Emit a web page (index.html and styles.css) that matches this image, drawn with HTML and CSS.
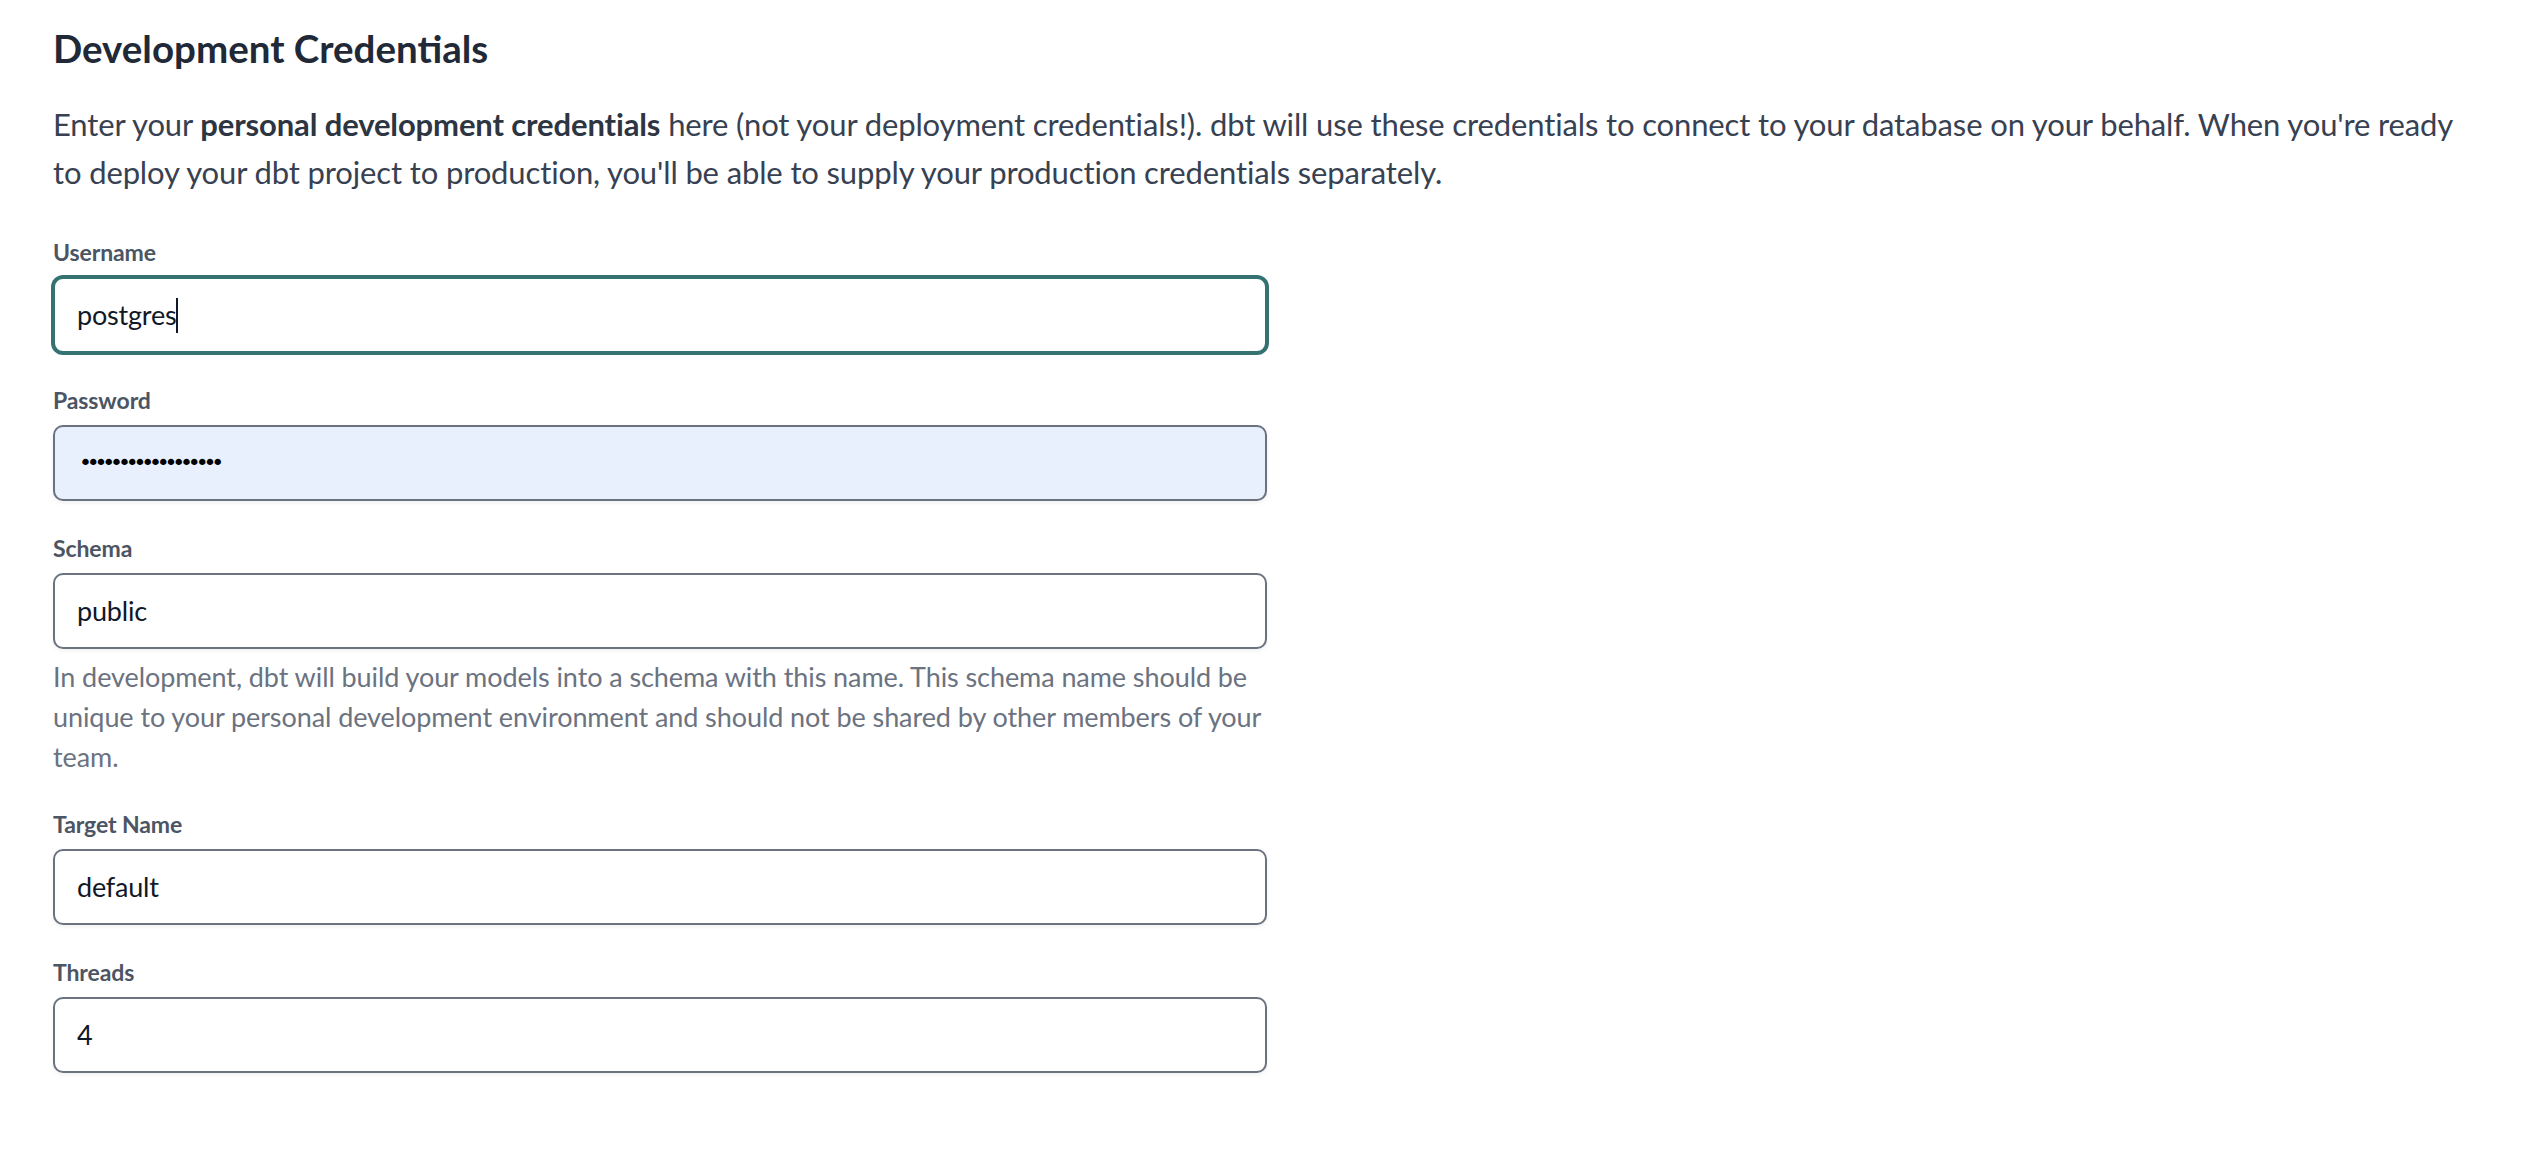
FILE: index.html
```html
<!DOCTYPE html>
<html lang="en">
<head>
<meta charset="utf-8">
<title>Development Credentials</title>
<link rel="stylesheet" href="styles.css">
</head>
<body>
<main class="page">
  <h2 class="title">Development Credentials</h2>
  <p class="intro">Enter your <strong>personal development credentials</strong> here (not your deployment credentials!). dbt will use these credentials to connect to your database on your behalf. When you're ready to deploy your dbt project to production, you'll be able to supply your production credentials separately.</p>

  <form class="form">
    <div class="field">
      <label class="label">Username</label>
      <div class="input input-focus"><span class="value">postgres</span><span class="caret"></span></div>
    </div>
    <div class="field">
      <label class="label">Password</label>
      <div class="input input-autofill"><span class="dots">••••••••••••••••••</span></div>
    </div>
    <div class="field">
      <label class="label">Schema</label>
      <div class="input"><span class="value">public</span></div>
      <p class="help">In development, dbt will build your models into a schema with this name. This schema name should be unique to your personal development environment and should not be shared by other members of your team.</p>
    </div>
    <div class="field">
      <label class="label">Target Name</label>
      <div class="input"><span class="value">default</span></div>
    </div>
    <div class="field">
      <label class="label">Threads</label>
      <div class="input"><span class="value">4</span></div>
    </div>
  </form>
</main>
</body>
</html>
```

FILE: styles.css
```css
* { box-sizing: border-box; }

html, body {
  margin: 0;
  padding: 0;
  background: #ffffff;
}

body {
  font-family: "Lato", "Liberation Sans", sans-serif;
}

.page {
  padding: 20px 54px 40px 53px;
}

.title {
  margin: 0;
  font-size: 38.5px;
  line-height: 56px;
  font-weight: 700;
  color: #1f2937;
  letter-spacing: 0;
}

.intro {
  margin: 24px 0 0 0;
  font-size: 31px;
  line-height: 48px;
  color: #374151;
  letter-spacing: -0.13px;
}

.intro strong {
  font-weight: 700;
  color: #2d3542;
}

.form {
  margin-top: 40px;
  width: 1214px;
  display: flex;
  flex-direction: column;
  gap: 31px;
}

.field {
  display: flex;
  flex-direction: column;
}

.label {
  display: block;
  font-size: 23px;
  line-height: 32px;
  font-weight: 700;
  color: #4b5563;
  margin-bottom: 9px;
  letter-spacing: -0.1px;
}

.input {
  height: 76px;
  border: 2px solid #6b7280;
  border-radius: 10px;
  background: #ffffff;
  padding: 0 22px;
  display: flex;
  align-items: center;
  box-shadow: 0 2px 4px rgba(17, 24, 39, 0.06);
}

.input-focus {
  border-color: #357373;
  box-shadow: 0 0 0 2px #357373;
}

.input-autofill {
  background: #e8f0fe;
}

.value {
  font-size: 27px;
  line-height: 34px;
  color: #111827;
  letter-spacing: -0.2px;
}

.caret {
  display: inline-block;
  width: 2px;
  height: 35px;
  background: #111827;
}

.dots {
  font-family: "DejaVu Sans", sans-serif;
  font-size: 22px;
  line-height: 24px;
  color: #000000;
  letter-spacing: -5.2px;
  padding-left: 2px;
}

.help {
  margin: 8px 0 0 0;
  font-size: 27px;
  line-height: 40px;
  color: #6b7280;
  letter-spacing: -0.08px;
}
```
